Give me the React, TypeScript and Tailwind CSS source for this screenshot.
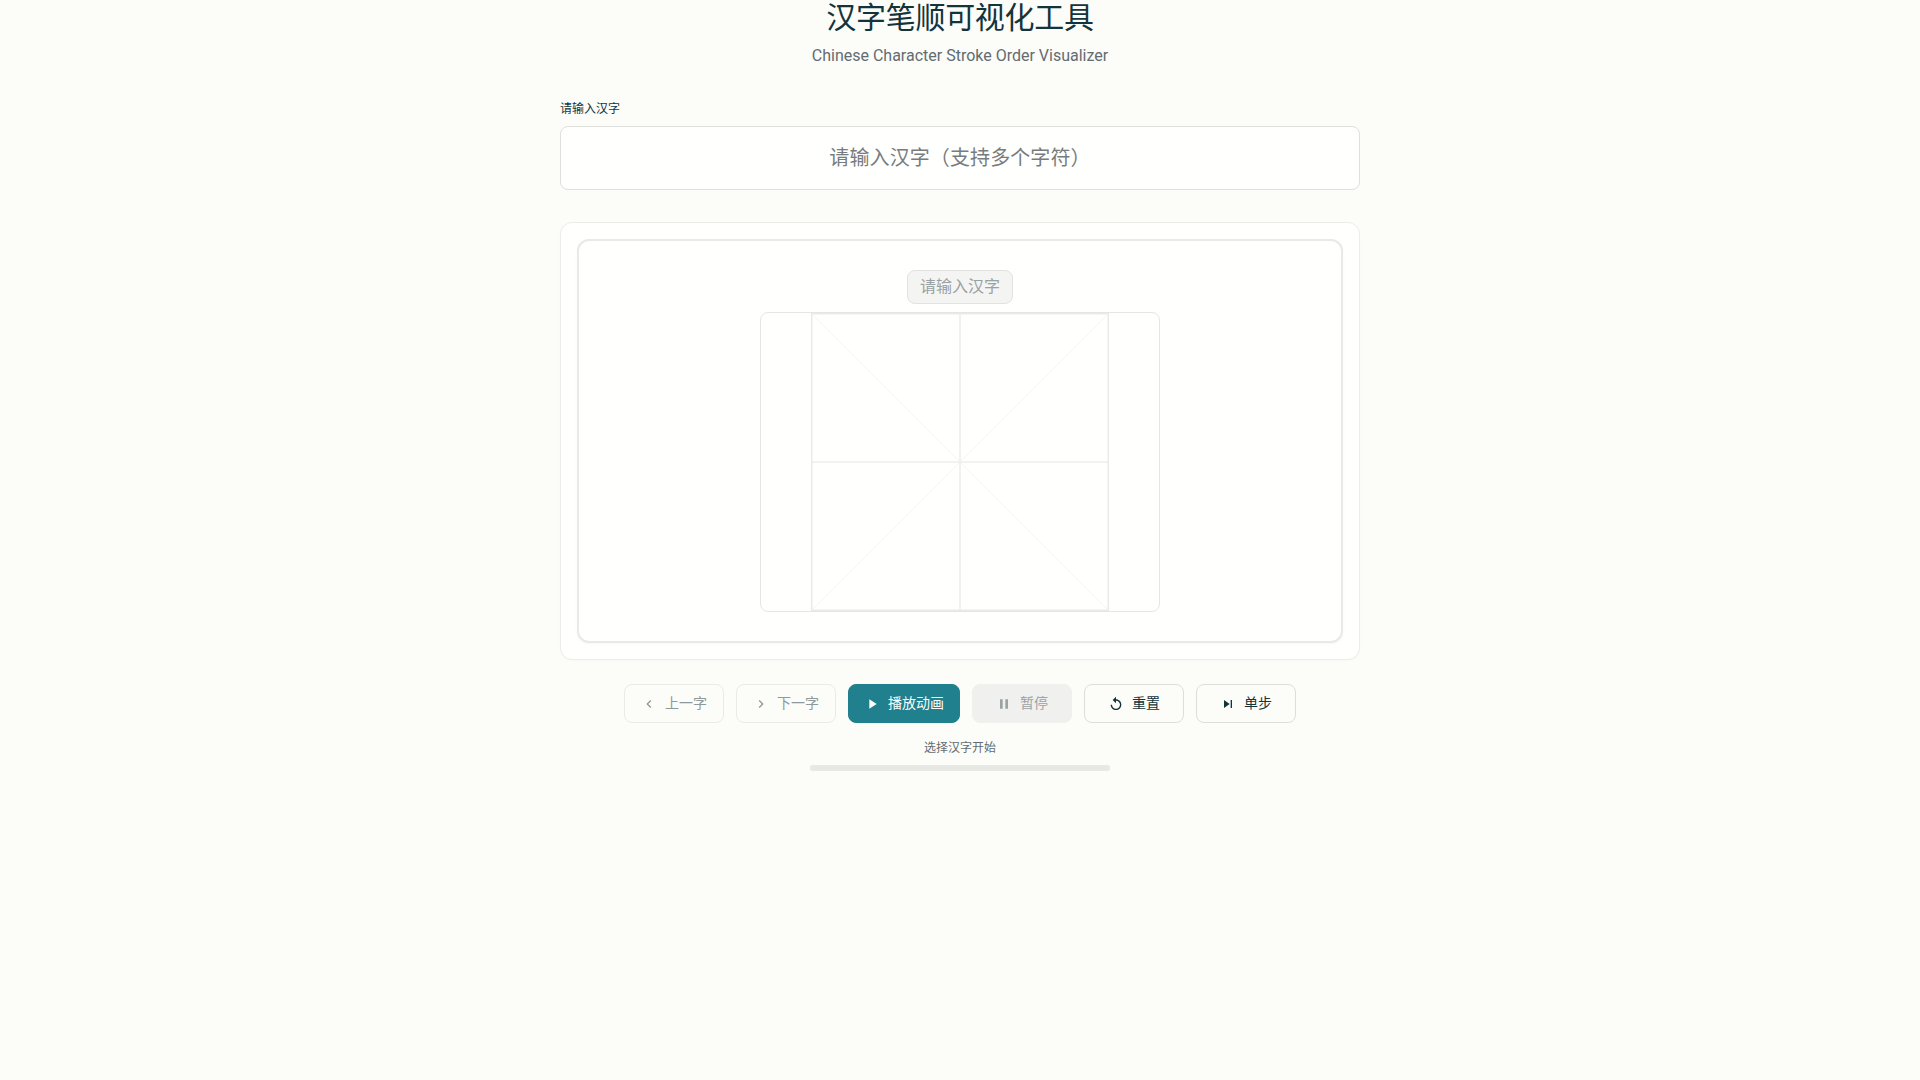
import React from "react";

function Btn({ d, label, kind, w }: { d: string; label: string; kind: "off" | "primary" | "pause" | "normal"; w: string }) {
  const cls =
    kind === "primary"
      ? "bg-[#21808d] text-[#fcfcf9] border-[#21808d]"
      : kind === "pause"
      ? "bg-[#f0f0ee] text-[#9aa2a4] border-[#f0f0ee]"
      : kind === "off"
      ? "text-[#8e999c] border-[#eaeae6]"
      : "text-[#13343b] border-[#deded9]";
  return (
    <div className={`h-[39px] ${w} rounded-[8px] border flex items-center justify-center gap-2 text-[14px] leading-[20px] ${cls}`}>
      <svg width="16" height="16" viewBox="0 0 24 24" fill="currentColor" className="shrink-0">
        <path d={d} />
      </svg>
      <span className="pb-[2px]">{label}</span>
    </div>
  );
}

const LEFT = "M15.41 7.41L14 6l-6 6 6 6 1.41-1.41L10.83 12z";
const RIGHT = "M10 6L8.59 7.41 13.17 12l-4.58 4.58L10 18l6-6z";
const PLAY = "M8 5v14l11-7z";
const PAUSE = "M6 19h4V5H6v14zm8-14v14h4V5h-4z";
const REPLAY = "M12 5V1L7 6l5 5V7c3.31 0 6 2.69 6 6s-2.69 6-6 6-6-2.69-6-6H4c0 4.42 3.58 8 8 8s8-3.58 8-8-3.58-8-8-8z";
const NEXT = "M6 18l8.5-6L6 6v12zM16 6v12h2V6h-2z";

export default function App() {
  return (
    <div className="min-h-[1080px] bg-[#fcfcf9] text-[#13343b] overflow-hidden font-['Roboto','Noto_Sans_CJK_SC',sans-serif]">
      <div className="w-[800px] mx-auto flex flex-col">
        <h1 className="text-[30px] leading-[36px] tracking-[-0.3px] text-center font-normal">汉字笔顺可视化工具</h1>
        <p className="text-[16px] leading-[24px] mt-[8px] text-center text-[#626c71]">Chinese Character Stroke Order Visualizer</p>
        <label className="text-[12px] leading-[18px] mt-[32px] text-[#13343b]">请输入汉字</label>
        <div className="mt-[8px] h-[64px] rounded-[8px] border border-[#dfdfdb] bg-[#fffffd] flex items-center justify-center text-[20px] tracking-[0.1px] text-[#777c7e]">请输入汉字（支持多个字符）</div>
        <div className="mt-[32px] rounded-[12px] border border-[#edece9] bg-[#fffffd] p-4 shadow-[0_1px_2px_rgba(0,0,0,0.02)]">
          <div className="h-[404px] rounded-[12px] border-2 border-[#e9e9e6] bg-[#fffffd] flex flex-col items-center pt-[29px] shadow-[0_1px_3px_rgba(0,0,0,0.03)]">
            <div className="h-[34px] px-[12px] rounded-[8px] border border-[#e2e2de] bg-[#f4f4f2] text-[16px] text-[#9aa1a3] flex items-center">请输入汉字</div>
            <div className="mt-[8px] w-[400px] h-[300px] rounded-[8px] border border-[#e6e6e3] bg-[#fffffd] flex justify-center">
              <svg width="298" height="298" viewBox="0 0 298 298" className="shrink-0" fill="none">
                <path d="M0 0 298 298M298 0 0 298" stroke="#f5f5f3" strokeWidth="1" />
                <path d="M149 0v298M0 149h298" stroke="#eeeeec" strokeWidth="1.6" />
                <rect x="0.7" y="0.7" width="296.6" height="296.6" stroke="#e9e9e6" strokeWidth="1.4" />
              </svg>
            </div>
          </div>
        </div>
        <div className="mt-[24px] flex justify-center gap-3">
          <Btn d={LEFT} label="上一字" kind="off" w="w-[100px]" />
          <Btn d={RIGHT} label="下一字" kind="off" w="w-[100px]" />
          <Btn d={PLAY} label="播放动画" kind="primary" w="w-[112px]" />
          <Btn d={PAUSE} label="暂停" kind="pause" w="w-[100px]" />
          <Btn d={REPLAY} label="重置" kind="normal" w="w-[100px]" />
          <Btn d={NEXT} label="单步" kind="normal" w="w-[100px]" />
        </div>
        <p className="mt-[16px] text-[12px] leading-[18px] text-center text-[#626c71]">选择汉字开始</p>
        <div className="mt-[8px] mx-auto w-[300px] h-[6px] rounded-full bg-[#e8e8e5]" />
      </div>
    </div>
  );
}
